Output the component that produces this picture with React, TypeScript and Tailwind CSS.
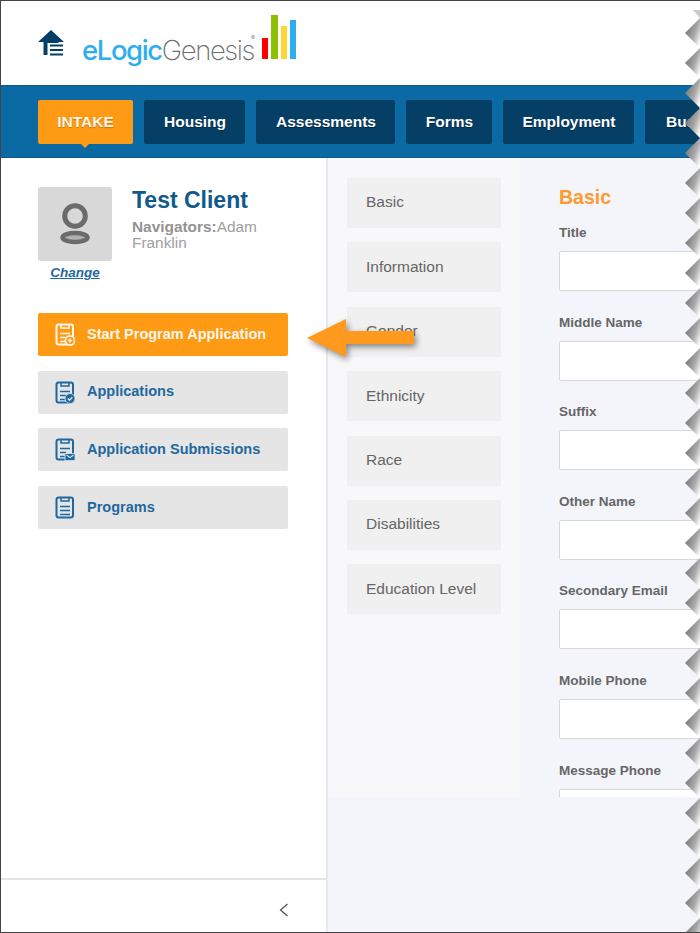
import type { ReactNode } from 'react';

const tabs = [
  { label: 'INTAKE', width: 'w-[95px]', active: true },
  { label: 'Housing', width: 'w-[101px]', active: false },
  { label: 'Assessments', width: 'w-[139px]', active: false },
  { label: 'Forms', width: 'w-[86px]', active: false },
  { label: 'Employment', width: 'w-[131px]', active: false },
  { label: 'Business', width: 'w-[110px]', active: false },
];

const sections = ['Basic', 'Information', 'Gender', 'Ethnicity', 'Race', 'Disabilities', 'Education Level'];
const fields = ['Title', 'Middle Name', 'Suffix', 'Other Name', 'Secondary Email', 'Mobile Phone', 'Message Phone'];

function ClipIcon({ badge }: { badge?: 'plus' | 'check' | 'mail' }) {
  const lines = badge ? ['M5 10.5h10', 'M5 14.5h6', 'M5 18.5h5'] : ['M5 10.5h10', 'M5 14.5h10', 'M5 18.5h10'];
  return (
    <svg width="20" height="23" viewBox="0 0 20 23" fill="none" stroke="currentColor" strokeWidth="2" className="shrink-0">
      <rect x="1.5" y="1.5" width="16.5" height="20" rx="2.2" />
      <path d="M6 1.5v3.5h8V1.5" strokeWidth="1.5" />
      {lines.map((d) => (
        <path key={d} d={d} strokeWidth="1.5" />
      ))}
      {badge === 'plus' && (
        <g>
          <circle cx="15" cy="17.5" r="4.6" fill="#ff9a14" strokeWidth="1.6" />
          <path d="M15 15.3v4.4M12.8 17.5h4.4" strokeWidth="1.4" />
        </g>
      )}
      {badge === 'check' && (
        <g>
          <circle cx="15" cy="17.5" r="5" fill="currentColor" stroke="#e5e5e5" strokeWidth="0.8" />
          <path d="M12.8 17.5l1.7 1.7 2.8-3" stroke="#e5e5e5" strokeWidth="1.3" />
        </g>
      )}
      {badge === 'mail' && (
        <g>
          <rect x="10" y="15.5" width="10" height="7" fill="currentColor" stroke="#e5e5e5" strokeWidth="0.8" />
          <path d="M11.5 17l3.5 2.6 3.5-2.6" stroke="#e5e5e5" strokeWidth="1.1" />
        </g>
      )}
    </svg>
  );
}

function SideButton({ icon, label, active }: { icon: ReactNode; label: string; active?: boolean }) {
  return (
    <div
      className={
        active
          ? 'flex h-[43px] items-center gap-[12px] rounded-[2px] bg-[#ff9a14] pl-[17px] text-[14.5px] font-bold text-[#fdf6ea]'
          : 'flex h-[43px] items-center gap-[12px] rounded-[2px] bg-[#e5e5e5] pl-[17px] text-[14.5px] font-bold text-[#1f689f]'
      }
    >
      {icon}
      <span>{label}</span>
    </div>
  );
}

function TornEdge() {
  const teeth = Array.from({ length: 31 }, (_, i) => 32 + i * 30);
  return (
    <svg width="15" height="933" viewBox="685 0 15 933" className="absolute right-0 top-0">
      <defs>
        <linearGradient id="tooth" x1="0" y1="0.15" x2="1" y2="0.85">
          <stop offset="0" stopColor="#6a6a6a" />
          <stop offset="0.6" stopColor="#a8a8a8" />
          <stop offset="1" stopColor="#ffffff" />
        </linearGradient>
      </defs>
      <polygon points="685,0 700,0 700,17 685,2" fill="#ffffff" />
      <polygon points="693,9 700,9 700,17" fill="#c9c9c9" />
      {teeth.map((y) => (
        <polygon key={y} points={`685,${y} 700,${y - 15} 700,${y + 15}`} fill="url(#tooth)" />
      ))}
    </svg>
  );
}

export default function App() {
  return (
    <div className="relative flex h-[933px] w-[700px] flex-col overflow-hidden border-y border-l border-[#444] bg-white font-['Liberation_Sans',sans-serif]">
      <header className="flex h-[84px] shrink-0 items-start bg-white pl-[37px]">
        <svg width="26" height="27" viewBox="0 0 26 27" className="mt-[29px]">
          <path d="M13 0L26 12H20.5V13H9.5V25H5.5V12H0Z" fill="#063f66" />
          <path d="M12 15.5H25M12 20H25M12 24.5H25" stroke="#063f66" strokeWidth="2" />
        </svg>
        <div className="ml-[18px] mt-[14px] flex items-end">
          <div className="relative flex w-[180px] items-baseline font-['Inter',sans-serif] text-[27.5px] leading-[20px] tracking-[-1.4px]">
            <span className="font-medium text-[#2eaeee]">eLogic</span>
            <span className="font-extralight text-[#6d6d6d]">Genesis</span>
            <span className="absolute left-[169px] top-[-6px] text-[6px] leading-[8px] tracking-normal text-[#888]">®</span>
          </div>
          <div className="mb-[1px] flex items-end gap-[3px]">
            <div className="h-[21px] w-[6px] bg-[#ff0000]" />
            <div className="h-[44px] w-[7px] bg-[#8cc000]" />
            <div className="h-[33px] w-[6px] bg-[#ffd733]" />
            <div className="h-[39px] w-[6px] bg-[#2eaeee]" />
          </div>
        </div>
      </header>

      <nav className="flex h-[73px] shrink-0 items-start gap-[11px] overflow-hidden border-y border-[#0a5a8e] bg-[#0b69a3] pl-[37px] pt-[14px]">
        {tabs.map((tab) => (
          <div
            key={tab.label}
            className={
              tab.active
                ? 'relative flex h-[44px] w-[95px] shrink-0 items-center justify-center rounded-[2px] bg-[#ff9a14] text-[15.5px] font-bold text-[#fff6e6] [text-shadow:0_1px_1px_rgba(0,0,0,.25)]'
                : `flex h-[44px] ${tab.width} shrink-0 items-center justify-center rounded-[2px] bg-[#063f66] pl-[1px] text-[15.5px] font-bold text-white [text-shadow:0_1px_1px_rgba(0,0,0,.4)]`
            }
          >
            {tab.label}
            {tab.active && (
              <div className="absolute bottom-[-4px] left-[43px] h-0 w-0 border-x-[4px] border-t-[4px] border-x-transparent border-t-[#ff9a14]" />
            )}
          </div>
        ))}
      </nav>

      <div className="flex min-h-0 flex-1">
        <aside className="flex w-[327px] shrink-0 flex-col border-r-2 border-[#e8e8ea] bg-white">
          <div className="flex-1 pl-[37px] pr-[38px] pt-[29px]">
            <div className="flex gap-[20px]">
              <div className="flex w-[74px] shrink-0 flex-col items-center">
                <div className="flex h-[74px] w-[74px] items-center justify-center rounded-[2px] bg-[#d8d8d8]">
                  <svg width="32" height="42" viewBox="0 0 32 42" fill="none" stroke="#6b6b6b">
                    <circle cx="16" cy="13" r="10.3" strokeWidth="5" />
                    <ellipse cx="16" cy="34.5" rx="12.5" ry="4.5" fill="#b0b0b0" strokeWidth="4.5" />
                  </svg>
                </div>
                <a className="mt-[3px] text-[13.5px] font-bold italic leading-[18px] text-[#1f689f] underline">Change</a>
              </div>
              <div className="min-w-0">
                <div className="text-[23px] font-bold leading-[26px] text-[#0f5a8a]">Test Client</div>
                <div className="mt-[6px] text-[15.4px] leading-[16px] text-[#a0a0a0]">
                  <b className="text-[#939393]">Navigators:</b>Adam Franklin
                </div>
              </div>
            </div>
            <div className="mt-[31px] flex w-[250px] flex-col gap-[14.7px]">
              <SideButton active label="Start Program Application" icon={<ClipIcon badge="plus" />} />
              <SideButton label="Applications" icon={<ClipIcon badge="check" />} />
              <SideButton label="Application Submissions" icon={<ClipIcon badge="mail" />} />
              <SideButton label="Programs" icon={<ClipIcon />} />
            </div>
          </div>
          <div className="flex h-[54px] items-center justify-end border-t-2 border-[#e4e4e6] pr-[37px] pt-[7px]">
            <svg width="10" height="14" viewBox="0 0 10 14" fill="none" stroke="#555" strokeWidth="1.3">
              <path d="M8.5 1L1.5 7l7 6" />
            </svg>
          </div>
        </aside>

        <main className="min-w-0 flex-1 bg-[#f4f5fa]">
          <div className="flex h-[639px] overflow-hidden">
            <div className="flex w-[192px] shrink-0 flex-col gap-[14.4px] bg-[#f8f8fb] pl-[19px] pt-[20px]">
              {sections.map((section) => (
                <div key={section} className="flex h-[50px] w-[154px] shrink-0 items-center bg-[#f0f0f0] pb-[2px] pl-[19px] text-[15.5px] text-[#666]">
                  {section}
                </div>
              ))}
            </div>
            <div className="min-w-0 flex-1 pl-[39px] pt-[27px]">
              <h2 className="text-[19.5px] font-bold leading-[24px] text-[#ff9a2e]">Basic</h2>
              <div className="mt-[15px] flex flex-col gap-[22.6px]">
                {fields.map((field) => (
                  <div key={field} className="shrink-0">
                    <div className="text-[13.5px] font-bold leading-[18px] text-[#666]">{field}</div>
                    <div className="mt-[9px] h-[40px] w-[200px] rounded-[2px] border border-[#d8d8dc] bg-white" />
                  </div>
                ))}
              </div>
            </div>
          </div>
        </main>
      </div>

      <svg width="110" height="40" viewBox="0 0 110 40" className="absolute left-[305px] top-[317px] drop-shadow-[2px_3px_3px_rgba(0,0,0,0.45)]">
        <polygon points="1,20 40,1 40,13 108,13 108,26 40,26 40,39" fill="#ff9a1e" />
      </svg>
      <TornEdge />
    </div>
  );
}
